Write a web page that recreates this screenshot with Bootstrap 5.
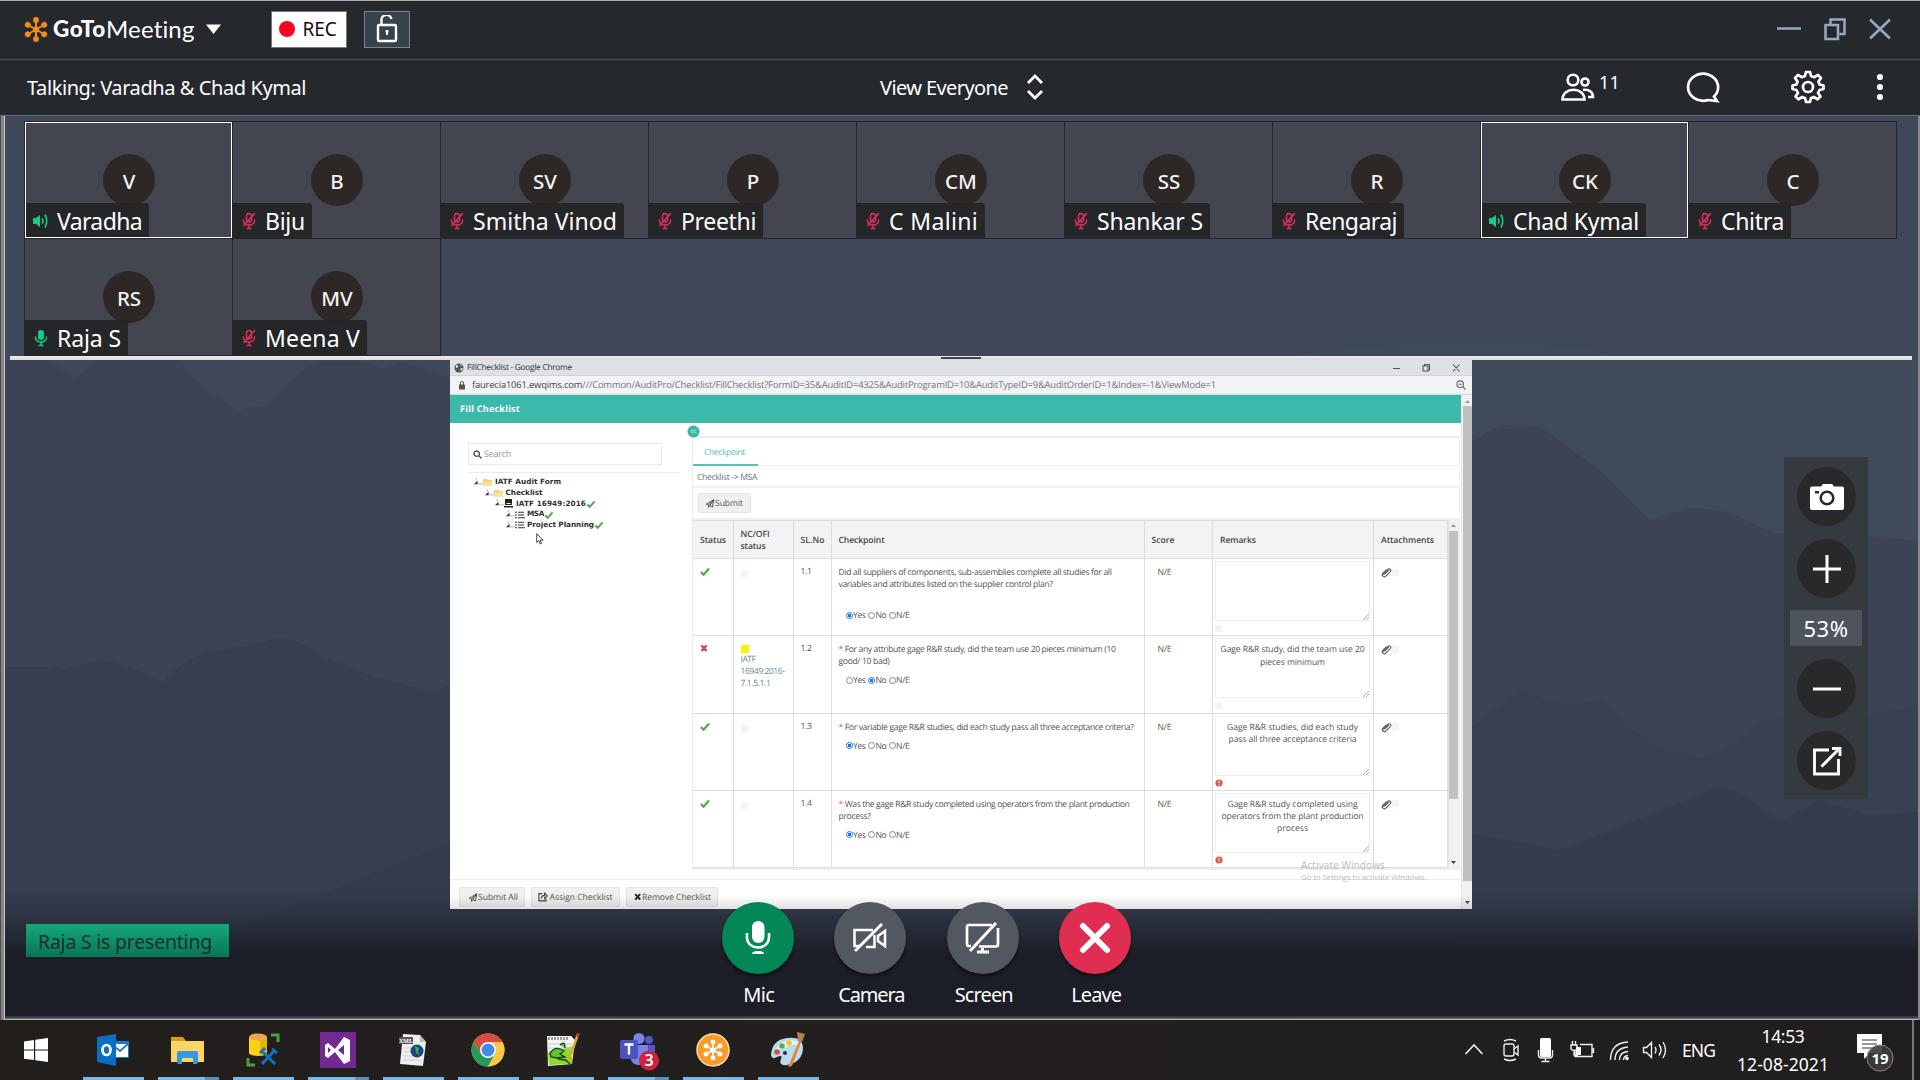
<!DOCTYPE html>
<html lang="en">
<head>
<meta charset="utf-8">
<title>GoToMeeting</title>
<link href="https://cdn.jsdelivr.net/npm/bootstrap@5.3.0/dist/css/bootstrap.min.css" rel="stylesheet">
<style>
body{width:1920px;height:1080px;overflow:hidden;background:#1f1d1d;font-family:"Noto Sans","Open Sans",sans-serif;color:#fff}
svg{display:block;flex:none}
[data-w]{white-space:nowrap;display:inline-block}
.meeting{height:1020px;border-top:1px solid #a9abad;background:#3f475b;overflow:hidden}
.titlebar{height:59px;background:#25292e;border-bottom:1px solid #4d515e;padding:0 29px 2px 23px}
.brand{font:24px/30px Lato,sans-serif}
.brand b{font-weight:900;font-size:22.5px}
.brand .thin{font-weight:400}
.rec{width:76px;height:37px;background:#fff;border:1px solid #777;color:#111;font-size:19px;margin-left:48px}
.dot{width:16px;height:16px;border-radius:50%;background:#fb0320}
.lock{width:46px;height:37px;background:#37434a;border:1px solid #7b8388;margin-left:17px}
.toolbar{height:56px;background:#25292e;border-top:1px solid #2c3038;border-bottom:1px solid #666a70;font-size:20px;padding-left:27px;padding-right:36px}
.toolbar>svg{margin-bottom:2px}
.main-area{height:904px}
.edge-l{width:5px;left:0;top:0;height:904px;background:linear-gradient(90deg,#4a4a4a 1px,#858585 1px,#858585 4px,#c9c9cb 4px)}
.edge-r{width:2px;right:0;top:0;height:904px;background:#8b8985}
.tiles{display:grid;grid-template-columns:repeat(9,208px);grid-template-rows:117px 117px;margin-left:24px;padding-top:5px;height:240px;width:1873px}
.tile{background:#434650;border:1px solid #24262b;margin:0 -1px -1px 0}
.tile.on{box-shadow:inset 0 0 0 1px #fff;z-index:2}
.avatar{width:52px;height:52px;border-radius:50%;background:#2d2725;margin:32px auto 0;padding:2px 0 0 1px;font-size:20.5px;font-weight:500;color:#f3f3f3}
.who{left:0;bottom:0;height:35px;background:rgba(36,36,38,.93);border-top-right-radius:3px;font-size:23px;line-height:34px;padding:0 7px 0 8px}
.on .who{left:1px;bottom:1px;height:34px;padding:2px 7px 0 7px}
.who svg{margin-right:8px}
.divider{height:4px;margin:0 8px 0 10px;background:linear-gradient(#f1ecef,#d9d8da)}
.grip{width:40px;height:2px;background:#44444a}
.shared{width:1022px;height:549px;margin-left:450px;background:#fff;color:#555;font:8.6px/12px "Open Sans",sans-serif;text-rendering:geometricPrecision}
.ch-title{height:16px;background:#dee1e6;border-bottom:1px solid #cfd2d6;color:#333;font-size:8.4px;padding:0 11px 0 4px}
.ch-url{height:19px;background:#f1f3f4;border-bottom:1px solid #d5d7d9;font-size:9.4px;color:#777;padding:0 6px 0 8px}
.ch-url i{font-style:normal;color:#444}
.page{height:514px}
.green{height:28px;background:#3bbaab;color:#fff;font-weight:700;font-size:9px;line-height:28px;padding-left:10px}
.vscroll{width:11px;background:#f1f1f1;border-left:1px solid #e6e6e6}
.thumb{background:#c1c1c1;width:9px}
.tree-side{width:242px;padding:20px 0 0 18px}
.search{width:194px;height:22px;border:1px solid #e9e9e9;color:#999;font-size:9px;padding-left:4px;margin-bottom:7px}
.tree{width:211px;border-top:1px solid #ebebeb;font:bold 7.3px/10.75px "DejaVu Sans",sans-serif;color:#333;padding-top:4px}
.tree div{height:10.75px}
.tree .me-1{margin-right:3px!important}
.panel{width:768px;height:434px;margin-top:13px;border:1px solid #ececec;border-top-width:2px;border-bottom:0}
.tabrow{height:28px;border-bottom:1px solid #eee}
.tab-on{width:65px;height:28px;border-bottom:2px solid #55c3b6;color:#5bc0b2;padding-left:11px;line-height:28px}
.crumb{height:22px;border-bottom:2px solid #f0f0f0;color:#6d7481;padding-left:4px;line-height:22px}
.bar{height:32px;border-bottom:2px solid #efefef;padding:5px}
.fbtn{height:20px;background:#f0f0f0;border:1px solid #e3e3e3;border-radius:2px;color:#555;white-space:nowrap}
.grid-t{width:754.5px;table-layout:fixed;border-collapse:collapse;margin-left:-1px}
.grid-t th,.grid-t td{border:1px solid #dcdcdc;vertical-align:top;padding:7px 0 0 7px;color:#555;font-weight:400}
.grid-t th{background:#f3f3f3;height:38px;vertical-align:middle;padding:0 0 0 7px;color:#444;font-weight:600}
.grid-t tr.r td{height:77px}
.grid-t td.rem{padding:2px 0 0 2px}
.grid-t td.sc{padding-left:13px}
.ta{width:155px;height:60px;border:1px solid #eee;text-align:center;line-height:12.2px;padding:4px 0 0}
.sq{width:7px;height:7px;background:#eef4f8}
.choice{padding-left:7px;margin-top:7px;height:12px}
.choice [data-w]{margin-right:2.5px}
.rd{width:7px;height:7px;border:1px solid #888;border-radius:50%;flex:none;margin-right:.5px}
.rd.c{border-color:#1a7be8;background:radial-gradient(#1677ee 45%,#fff 50%)}
.ast{color:#d9534f}
.foot{height:30px;border-top:1px solid #ebebeb;padding:7px 0 0 9px;gap:6px}
.shade{left:5px;right:2px;top:774px;height:126px;background:linear-gradient(rgba(26,29,37,0),rgba(26,29,37,.22) 20px,#1b1e27 66px,#1b1e27);clip-path:polygon(0 0,445px 0,445px 19px,1467px 19px,1467px 0,100% 0,100% 100%,0 100%)}
.shade-app{bottom:0;left:0;right:0;height:14px;background:linear-gradient(rgba(0,0,0,0),rgba(0,0,0,.12))}
.frame-b{top:900px;height:4px;background:linear-gradient(#333c50 2px,#6f7072 2px,#6f7072 3px,#b5b5b5 3px)}
.presenting{left:26px;top:808px;width:203px;height:33px;background:linear-gradient(#13a97b,#0b7453);color:#16302c;font-size:19.5px;padding-left:12px;line-height:36px}
.controls{left:701.5px;top:786px;font-size:20px}
.ctl{width:112.5px}
.ctl>div{width:72px;height:72px;border-radius:50%;background:#525862;box-shadow:0 3px 3px rgba(0,0,0,.45)}
.ctl>span{margin:6px 0 0 2px}
.side{left:1784px;top:341px;width:84px;height:342px;background:#343a40;padding-top:10px}
.side>div{flex:none}
.side>.rb{width:59px;height:59px;border-radius:50%;background:#292929;margin-bottom:13px;padding:1px 0 0 2px}
.pct{width:72px;height:36px;background:#4d545e;font-size:22px;margin:-1px 0 13px}
.wm{left:1301px;top:743px;color:#bdbdbd;line-height:12px;font-family:"Open Sans",sans-serif}
.wm .big{font-size:10px}
.wm .sub{font-size:8px}
.tasks{height:60px;background:linear-gradient(90deg,#211e1c,#231f1f 50%,#201e1e);padding-left:8px}
.app-i{width:75px;height:60px}
.app-i>svg{margin:auto}
.run{width:61px;height:3px;background:#76b9ed;bottom:0;left:8px}
.run.multi{background:linear-gradient(90deg,#76b9ed 47px,#5d90b8 47px)}
.tray{margin-left:auto;width:460px;font-size:17.5px}
</style>
<script src="https://cdn.jsdelivr.net/npm/bootstrap@5.3.0/dist/js/bootstrap.bundle.min.js"></script>
</head>
<body>
<svg width="0" height="0" class="position-absolute">
<defs>
<symbol id="muted" viewBox="0 0 16 18"><g fill="none" stroke="#e0305a" stroke-width="1.5"><rect x="5.5" y="1.5" width="5" height="8.5" rx="2.5"/><path d="M2.5 7.5v1c0 6 11 6 11 0v-1M8 13v3M5.5 16.5h5M14 1 2.5 14"/></g></symbol>
<symbol id="live" viewBox="0 0 16 18"><rect x="5" y="1" width="6" height="10" rx="3" fill="#12cd89"/><path d="M2.5 7.5v1c0 6 11 6 11 0v-1M8 13v3M5.5 16.5h5" fill="none" stroke="#12cd89" stroke-width="1.5"/></symbol>
<symbol id="spk" viewBox="0 0 16 16"><path d="M0 5h3l4-3v12l-4-3H0z" fill="#12cd89"/><path d="M9 5.500q2 2.500 0 5M12 1.500q3.500 6.500 0 13" fill="none" stroke="#12cd89" stroke-width="1.700"/></symbol>
<symbol id="flower" viewBox="-13 -13 26 26"><g fill="currentColor" stroke="currentColor"><g id="pt"><path d="M0 0V-9" stroke-width="2"/><circle cy="-9.5" r="2.9" stroke="none"/></g><use href="#pt" transform="rotate(60)"/><use href="#pt" transform="rotate(120)"/><use href="#pt" transform="rotate(180)"/><use href="#pt" transform="rotate(240)"/><use href="#pt" transform="rotate(300)"/><circle r="3" stroke="none"/></g></symbol>
<symbol id="ok" viewBox="0 0 10 9"><path d="M1 5l2.6 2.7L9 1.6" fill="none" stroke="#5aa650" stroke-width="2.3"/></symbol>
<symbol id="clip" viewBox="0 0 11 11"><path d="M2 8 7.3 2.5a1.7 1.7 0 0 1 2.3 2.3L5 9.4A2 2 0 0 1 1.7 7L5.5 3.2M3.5 7.7 7.8 3.5" fill="none" stroke="#666" stroke-width="1.2"/></symbol>
<symbol id="grab" viewBox="0 0 6 6"><path d="M0 6 6 0M3 6l3-3" stroke="#999" stroke-width=".8"/></symbol>
<symbol id="fold" viewBox="0 0 9 8"><path d="M0 1h4l1 1h4v6H0z" fill="#f0cf6b"/><path d="M1 3.5h8V8H0z" fill="#f9e29a"/></symbol>
<symbol id="exp" viewBox="0 0 10 10"><path d="M0 7h4V3z" fill="#333"/><path d="M4 6.5h6M2.5 0v3" stroke="#999" stroke-width=".8"/></symbol>
<symbol id="lst" viewBox="0 0 10 8"><path d="M0 1.2h2M3 1.2h6M0 4h2M3 4h6M0 6.8h2M3 6.8h7" stroke="#333" stroke-width="1.1"/></symbol>
<symbol id="plane" viewBox="0 0 9 9"><path d="M.8 5.2 8.3.8 7 8 4.3 6.6 3 8.3V6zM3 6l5.3-5.2L4.3 6.6" fill="none" stroke="#444" stroke-width=".9"/></symbol>
<symbol id="err" viewBox="0 0 8 8"><circle cx="4" cy="4" r="3.6" fill="#dc5a4c"/><path d="M4 1.8v2.6M4 5.2v1" stroke="#fff" stroke-width="1"/></symbol>
</defs>
</svg>

<div class="meeting">
  <header class="titlebar d-flex align-items-center">
    <svg width="26" height="27" viewBox="-13 -13 26 26" style="color:#f68d16"><use href="#flower" x="-13" y="-13" width="26" height="26"/></svg>
    <div class="brand ms-1 d-flex"><b data-w="53">GoTo</b><span class="thin" data-w="89">Meeting</span></div>
    <svg class="ms-2" width="20" height="12" viewBox="0 0 20 12"><path d="M3 1.5h15L10.500 11z" fill="#fff"/></svg>
    <div class="rec d-flex align-items-center"><span class="dot" style="margin-left:7px"></span><span class="ms-2" data-w="34">REC</span></div>
    <div class="lock d-flex align-items-center justify-content-center"><svg width="22" height="28" viewBox="0 0 22 28" fill="none" stroke="#fff" stroke-width="2.4"><rect x="2" y="10" width="18" height="16" rx="1"/><path d="M5.500 10V6a5 5 0 0 1 10-2"/><path d="M11 15v5M9.500 16.500h3" stroke-width="2"/></svg></div>
    <svg class="ms-auto" width="116" height="24" viewBox="0 0 116 24" fill="none" stroke="#99a9c0" stroke-width="2.500"><path d="M2 11.500h24"/><path d="M55.500 8V2.500H69.500V17H64.500M50.500 8h12.500v14H50.500z"/><path d="M95 2.500 115 21.500M115 2.500 95 21.500"/></svg>
  </header>
  <div class="toolbar d-flex align-items-center">
    <span data-w="279">Talking: Varadha &amp; Chad Kymal</span>
    <span style="margin-left:574px" data-w="128">View Everyone</span>
    <svg style="margin-left:18px" width="18" height="26" viewBox="0 0 18 26" fill="none" stroke="#fff" stroke-width="2.800"><path d="M2 9l7-7 7 7M2 17l7 7 7-7"/></svg>
    <svg class="ms-auto" width="34" height="30" viewBox="0 0 34 30" fill="none" stroke="#fff" stroke-width="2.600"><circle cx="12" cy="8" r="5.300"/><circle cx="24" cy="10" r="3.500"/><path d="M1.500 27.500c0-13 22-13 22 0zM22 18c6-1 10 2 10 7h-5"/></svg>
    <span class="pb-2 mb-1" style="font-size:18px;margin-left:4px" data-w="21">11</span>
    <svg style="margin-left:66px" width="34" height="32" viewBox="0 0 34 32" fill="none" stroke="#fff" stroke-width="2.700"><path d="M28 25.500A15 13.500 0 1 0 22 29l9 1z"/></svg>
    <svg style="margin-left:70px" width="36" height="34" viewBox="-18 -17 36 34" fill="none" stroke="#fff" stroke-width="2.700" stroke-linejoin="round"><circle r="5"/><path d="M-3-11-2-15H2L3-11 6-9.800 10-12 13-9 10.500-5.500 11.500-2.500 15.500-1.500V2L11.500 3 10 6 12.500 9.500 9.500 12.300 6 10 3 11 2 15H-2L-3 11-6 10-9.500 12.300-12.500 9.500-10 6-11.500 3-15.500 2V-1.500L-11.500-2.500-10.500-5.500-13-9-10-12-6-9.800Z"/></svg>
    <svg style="margin-left:50px" width="8" height="28" viewBox="0 0 8 28" fill="#fff"><circle cx="4" cy="4" r="3.100"/><circle cx="4" cy="14" r="3.100"/><circle cx="4" cy="24" r="3.100"/></svg>
  </div>

  <main class="main-area position-relative">
    <svg class="position-absolute top-0 start-0" width="1920" height="904" viewBox="0 116 1920 904">
      <rect y="116" width="1920" height="904" fill="#3f475a"/>
      <path d="M1280 356Q1500 330 1620 356L1920 356V560H1455V356Z" fill="#3f4a5b"/>
      <path d="M5 360H50L73 379 100 360H180Q195 385 238 411L252 407 265 406Q300 370 318 361H360L385 369 400 362Q430 370 450 379V900H5Z" fill="#3c4355"/>
      <path d="M1455 452 1500 425 1540 427 1600 470 1650 520 1690 508Q1715 508 1735 515L1772 533 1868 536 1918 541V1020H1455Z" fill="#3c4356"/>
      <path d="M5 667H50L55 665 60 670 100 660Q125 662 162 682 185 660 205 653L262 643Q290 630 322 657L372 676 425 690H440L450 684V1020H5Z" fill="#363e4f"/>
      <path d="M1455 740 1520 690 1560 705 1600 700 1650 745 1700 758Q1740 745 1755 726 1765 718 1784 716H1868L1918 706V1020H1455Z" fill="#394053"/>
      <path d="M1455 830 1560 850 1650 815 1700 795Q1722 780 1745 796L1780 822 1820 800 1868 815 1918 812V1020H1455Z" fill="#343c4d"/>
      <path d="M30 1010 450 843H1455V1020H30Z" fill="#343b4c"/>
    </svg>
    <section class="tiles position-relative">
      <div class="tile on position-relative"><div class="avatar d-flex align-items-center justify-content-center">V</div><div class="who position-absolute d-flex align-items-center"><svg width="16" height="16"><use href="#spk"/></svg><span data-w="85">Varadha</span></div></div>
      <div class="tile position-relative"><div class="avatar d-flex align-items-center justify-content-center">B</div><div class="who position-absolute d-flex align-items-center"><svg width="16" height="18"><use href="#muted"/></svg><span data-w="40">Biju</span></div></div>
      <div class="tile position-relative"><div class="avatar d-flex align-items-center justify-content-center">SV</div><div class="who position-absolute d-flex align-items-center"><svg width="16" height="18"><use href="#muted"/></svg><span data-w="144">Smitha Vinod</span></div></div>
      <div class="tile position-relative"><div class="avatar d-flex align-items-center justify-content-center">P</div><div class="who position-absolute d-flex align-items-center"><svg width="16" height="18"><use href="#muted"/></svg><span data-w="75">Preethi</span></div></div>
      <div class="tile position-relative"><div class="avatar d-flex align-items-center justify-content-center">CM</div><div class="who position-absolute d-flex align-items-center"><svg width="16" height="18"><use href="#muted"/></svg><span data-w="89">C Malini</span></div></div>
      <div class="tile position-relative"><div class="avatar d-flex align-items-center justify-content-center">SS</div><div class="who position-absolute d-flex align-items-center"><svg width="16" height="18"><use href="#muted"/></svg><span data-w="106">Shankar S</span></div></div>
      <div class="tile position-relative"><div class="avatar d-flex align-items-center justify-content-center">R</div><div class="who position-absolute d-flex align-items-center"><svg width="16" height="18"><use href="#muted"/></svg><span data-w="92">Rengaraj</span></div></div>
      <div class="tile on position-relative"><div class="avatar d-flex align-items-center justify-content-center">CK</div><div class="who position-absolute d-flex align-items-center"><svg width="16" height="16"><use href="#spk"/></svg><span data-w="126">Chad Kymal</span></div></div>
      <div class="tile position-relative"><div class="avatar d-flex align-items-center justify-content-center">C</div><div class="who position-absolute d-flex align-items-center"><svg width="16" height="18"><use href="#muted"/></svg><span data-w="63">Chitra</span></div></div>
      <div class="tile position-relative"><div class="avatar d-flex align-items-center justify-content-center">RS</div><div class="who position-absolute d-flex align-items-center"><svg width="16" height="18"><use href="#live"/></svg><span data-w="64">Raja S</span></div></div>
      <div class="tile position-relative"><div class="avatar d-flex align-items-center justify-content-center">MV</div><div class="who position-absolute d-flex align-items-center"><svg width="16" height="18"><use href="#muted"/></svg><span data-w="95">Meena V</span></div></div>
    </section>
    <div class="divider position-relative d-flex justify-content-center align-items-center"><div class="grip"></div></div>

    <section class="shared position-relative d-flex flex-column">
      <div class="ch-title d-flex align-items-center">
        <svg width="10" height="10" viewBox="0 0 10 10"><circle cx="5" cy="5" r="4.500" fill="#555"/><path d="M2 2q3 0 2 2-2 2-2 0M6 6q3-2 3 0L7 8zM6 1l1 2 1-1" fill="#dee1e6"/></svg>
        <span style="margin-left:3px" data-w="105">FillChecklist - Google Chrome</span>
        <svg class="ms-auto" width="68" height="10" viewBox="0 0 68 10" fill="none" stroke="#555" stroke-width="1.100"><path d="M0 5.500h7M30 3h5v5h-5zM31.500 3V1.500h5V7H35M60 1.500l6.500 7M66.500 1.500 60 8.500"/></svg>
      </div>
      <div class="ch-url d-flex align-items-center">
        <svg width="8" height="9" viewBox="0 0 8 9"><rect x="1" y="3.500" width="6" height="5" fill="#555"/><path d="M2.500 4V2a1.500 1.500 0 0 1 3 0v2" fill="none" stroke="#555"/></svg>
        <span style="margin-left:6px" data-w="744"><i>faurecia1061.ewqims.com</i>///Common/AuditPro/Checklist/FillChecklist?FormID=35&amp;AuditID=4325&amp;AuditProgramID=10&amp;AuditTypeID=9&amp;AuditOrderID=1&amp;Index=-1&amp;ViewMode=1</span>
        <svg class="ms-auto" width="10" height="10" viewBox="0 0 10 10" fill="none" stroke="#666" stroke-width="1.100"><circle cx="4.200" cy="4.200" r="3.300"/><path d="M2.500 4.200h3.400M6.800 6.800 9.500 9.500"/></svg>
      </div>
      <div class="page d-flex">
        <div style="width:1011px">
          <div class="green"><span data-w="60">Fill Checklist</span></div>
          <div class="d-flex" style="height:456px">
            <div class="tree-side">
              <div class="search d-flex align-items-center"><svg width="9" height="9" viewBox="0 0 9 9" fill="none" stroke="#555" stroke-width="1.400"><circle cx="3.700" cy="3.700" r="2.700"/><path d="M5.800 5.800 8.500 8.500"/></svg><span style="margin-left:2px" data-w="27">Search</span></div>
              <div class="tree">
                <div class="d-flex align-items-center" style="padding-left:6px"><svg width="9" height="9"><use href="#exp"/></svg><svg class="me-1" width="9" height="8"><use href="#fold"/></svg><span data-w="66">IATF Audit Form</span></div>
                <div class="d-flex align-items-center" style="padding-left:16.500px"><svg width="9" height="9"><use href="#exp"/></svg><svg class="me-1" width="9" height="8"><use href="#fold"/></svg><span data-w="37">Checklist</span></div>
                <div class="d-flex align-items-center" style="padding-left:27px"><svg width="9" height="9"><use href="#exp"/></svg><svg class="me-1" width="9" height="9" viewBox="0 0 9 9"><path d="M1 0h7v6H1zM0 7h9v1.500H0z" fill="#222"/><path d="M2.500 4.500h4" stroke="#fff"/></svg><span data-w="70">IATF 16949:2016</span><svg width="10" height="8"><use href="#ok"/></svg></div>
                <div class="d-flex align-items-center" style="padding-left:38px"><svg width="9" height="9"><use href="#exp"/></svg><svg style="margin-right:2px" width="10" height="8"><use href="#lst"/></svg><span data-w="17">MSA</span><svg width="10" height="8"><use href="#ok"/></svg></div>
                <div class="d-flex align-items-center" style="padding-left:38px"><svg width="9" height="9"><use href="#exp"/></svg><svg style="margin-right:2px" width="10" height="8"><use href="#lst"/></svg><span data-w="67">Project Planning</span><svg width="10" height="8"><use href="#ok"/></svg></div>
                <svg style="margin:2px 0 0 68px" width="8" height="12" viewBox="0 0 8 12"><path d="M.7.7V9.500L2.800 7.600 4.200 11 5.500 10.400 4.200 7.200H7z" fill="#fff" stroke="#333" stroke-width=".9"/></svg>
              </div>
            </div>
            <div class="panel position-relative">
              <svg class="position-absolute" style="left:-6px;top:-13px" width="13" height="13" viewBox="0 0 13 13"><circle cx="6.500" cy="6.500" r="6" fill="#3bb5a5"/><path d="M6 4.500l-2 2 2 2M9 4.500l-2 2 2 2" fill="none" stroke="#d9f5f1"/></svg>
              <div class="tabrow"><div class="tab-on"><span data-w="41">Checkpoint</span></div></div>
              <div class="crumb"><span data-w="60">Checklist -&gt; MSA</span></div>
              <div class="bar"><div class="fbtn d-inline-flex align-items-center" style="width:53px;padding-left:6px"><svg width="10" height="9"><use href="#plane"/></svg><span data-w="28">Submit</span></div></div>
              <div class="d-flex" style="height:350px;border-bottom:2px solid #eee;overflow:hidden">
                <table class="grid-t">
                  <colgroup><col style="width:40.500px"><col style="width:60px"><col style="width:38px"><col style="width:313px"><col style="width:68.500px"><col style="width:161px"><col style="width:73.500px"></colgroup>
                  <tr><th><span data-w="26">Status</span></th><th><span data-w="29">NC/OFI</span><br><span data-w="25">status</span></th><th><span data-w="24">SL.No</span></th><th><span data-w="46">Checkpoint</span></th><th><span data-w="23">Score</span></th><th><span data-w="36">Remarks</span></th><th><span data-w="53">Attachments</span></th></tr>
                  <tr class="r"><td><svg width="10" height="9" style="margin-top:1px"><use href="#ok"/></svg></td><td><div class="sq mt-1"></div></td><td style="padding-top:6px"><span data-w="11">1.1</span></td>
                    <td><span data-w="273">Did all suppliers of components, sub-assemblies complete all studies for all</span><br><span data-w="214">variables and attributes listed on the supplier control plan?</span><div class="choice d-flex align-items-center" style="margin-top:19px"><span class="rd c"></span><span data-w="12.5">Yes</span><span class="rd"></span><span data-w="10.5">No</span><span class="rd"></span><span data-w="13.5">N/E</span></div></td>
                    <td class="sc"><span data-w="14">N/E</span></td><td class="rem"><div class="ta d-flex align-items-end justify-content-end"><svg width="6" height="6"><use href="#grab"/></svg></div><div class="sq mt-1"></div></td><td><div class="d-flex align-items-center"><svg width="11" height="12"><use href="#clip"/></svg><div class="sq"></div></div></td></tr>
                  <tr class="r"><td><svg width="9" height="9" viewBox="0 0 9 9" style="margin-top:1px"><path d="M1.500 1.500l5 5.500M6.500 1.500l-5 5.500" stroke="#cf4a44" stroke-width="2.500"/></svg></td><td><div style="width:8px;height:8px;margin:2px 0 0;background:#fff000"></div><span style="color:#6b8597"><span data-w="15">IATF</span><br><span data-w="44">16949:2016-</span><br><span data-w="30">7.1.5.1.1</span></span></td><td style="padding-top:6px"><span data-w="11">1.2</span></td>
                    <td><span data-w="277"><span class="ast">*</span> For any attribute gage R&amp;R study, did the team use 20 pieces minimum (10</span><br><span data-w="51">good/ 10 bad)</span><div class="choice d-flex align-items-center"><span class="rd"></span><span data-w="12.5">Yes</span><span class="rd c"></span><span data-w="10.5">No</span><span class="rd"></span><span data-w="13.5">N/E</span></div></td>
                    <td class="sc"><span data-w="14">N/E</span></td><td class="rem"><div class="ta position-relative"><span data-w="144">Gage R&amp;R study, did the team use 20</span><br><span data-w="65">pieces minimum</span><svg class="position-absolute bottom-0 end-0" width="6" height="6"><use href="#grab"/></svg></div><div class="sq mt-1"></div></td><td><div class="d-flex align-items-center"><svg width="11" height="12"><use href="#clip"/></svg><div class="sq"></div></div></td></tr>
                  <tr class="r"><td><svg width="10" height="9" style="margin-top:1px"><use href="#ok"/></svg></td><td><div class="sq mt-1"></div></td><td style="padding-top:6px"><span data-w="11">1.3</span></td>
                    <td><span data-w="295"><span class="ast">*</span> For variable gage R&amp;R studies, did each study pass all three acceptance criteria?</span><div class="choice d-flex align-items-center"><span class="rd c"></span><span data-w="12.5">Yes</span><span class="rd"></span><span data-w="10.5">No</span><span class="rd"></span><span data-w="13.5">N/E</span></div></td>
                    <td class="sc"><span data-w="14">N/E</span></td><td class="rem"><div class="ta position-relative"><span data-w="131">Gage R&amp;R studies, did each study</span><br><span data-w="128">pass all three acceptance criteria</span><svg class="position-absolute bottom-0 end-0" width="6" height="6"><use href="#grab"/></svg></div><svg style="margin-top:3px" width="8" height="8"><use href="#err"/></svg></td><td><div class="d-flex align-items-center"><svg width="11" height="12"><use href="#clip"/></svg><div class="sq"></div></div></td></tr>
                  <tr class="r"><td><svg width="10" height="9" style="margin-top:1px"><use href="#ok"/></svg></td><td><div class="sq mt-1"></div></td><td style="padding-top:6px"><span data-w="11">1.4</span></td>
                    <td><span data-w="291"><span class="ast">*</span> Was the gage R&amp;R study completed using operators from the plant production</span><br><span data-w="32">process?</span><div class="choice d-flex align-items-center"><span class="rd c"></span><span data-w="12.5">Yes</span><span class="rd"></span><span data-w="10.5">No</span><span class="rd"></span><span data-w="13.5">N/E</span></div></td>
                    <td class="sc"><span data-w="14">N/E</span></td><td class="rem"><div class="ta position-relative"><span data-w="130">Gage R&amp;R study completed using</span><br><span data-w="142">operators from the plant production</span><br><span data-w="31">process</span><svg class="position-absolute bottom-0 end-0" width="6" height="6"><use href="#grab"/></svg></div><svg style="margin-top:3px" width="8" height="8"><use href="#err"/></svg></td><td><div class="d-flex align-items-center"><svg width="11" height="12"><use href="#clip"/></svg><div class="sq"></div></div></td></tr>
                </table>
                <div class="vscroll d-flex flex-column align-items-center"><svg width="9" height="11" viewBox="0 0 9 11"><path d="M2 7h5L4.500 4z" fill="#999"/></svg><div class="thumb" style="height:268px"></div><svg class="mt-auto" width="9" height="12" viewBox="0 0 9 12"><path d="M2 5h5L4.500 8z" fill="#444"/></svg></div>
              </div>
            </div>
          </div>
          <div class="foot d-flex">
            <div class="fbtn d-flex align-items-center" style="width:66px;padding-left:8px"><svg width="10" height="9"><use href="#plane"/></svg><span data-w="40">Submit All</span></div>
            <div class="fbtn d-flex align-items-center" style="width:89px;padding-left:6px"><svg style="margin-right:1.500px" width="10" height="10" viewBox="0 0 9 9" fill="none" stroke="#444"><path d="M4 1.500H.8v6.500h6.500V6M3 6q0-3 3-3V1l2.500 2.500L6 6V4"/></svg><span data-w="63">Assign Checklist</span></div>
            <div class="fbtn d-flex align-items-center" style="width:92px;padding-left:7px"><svg width="8" height="8" viewBox="0 0 8 8"><path d="M1.200 1.200l5 5.500M6.200 1.200l-5 5.500" stroke="#222" stroke-width="1.900"/></svg><span data-w="69">Remove Checklist</span></div>
          </div>
        </div>
        <div class="vscroll d-flex flex-column align-items-center"><svg width="9" height="11" viewBox="0 0 9 11"><path d="M2 8h5L4.500 5z" fill="#999"/></svg><div class="thumb" style="height:475px"></div><svg class="mt-auto" width="9" height="12" viewBox="0 0 9 12"><path d="M2 4h5L4.500 7z" fill="#444"/></svg></div>
      </div>
      <div class="shade-app position-absolute"></div>
    </section>

    <div class="wm position-absolute d-flex flex-column align-items-start"><span class="big" data-w="84">Activate Windows</span><span class="sub" data-w="125">Go to Settings to activate Windows.</span></div>
    <div class="shade position-absolute"></div>
    <div class="frame-b position-absolute w-100"></div>
    <div class="edge-l position-absolute"></div>
    <div class="edge-r position-absolute"></div>
    <div class="presenting position-absolute"><span data-w="174">Raja S is presenting</span></div>

    <div class="controls position-absolute d-flex">
      <div class="ctl d-flex flex-column align-items-center"><div class="d-flex align-items-center justify-content-center" style="background:#038757"><svg width="26" height="34" viewBox="0 0 26 34"><rect x="7" y="0" width="12.500" height="22" rx="6.200" fill="#fff"/><path d="M2 12v4c0 14 22 14 22 0v-4" fill="none" stroke="#fff" stroke-width="2.600"/><path d="M7 33q0-3 6-3t6 3z" fill="#fff"/></svg></div><span data-w="31">Mic</span></div>
      <div class="ctl d-flex flex-column align-items-center"><div class="d-flex align-items-center justify-content-center"><svg width="36" height="30" viewBox="0 0 36 30" fill="none" stroke="#fff" stroke-width="2.500"><path d="M21 7H2.500V23H8M14 24h8.500V12M26 13l7-5V23l-7-5z"/><path d="M30 1 3 28" stroke-width="3"/></svg></div><span data-w="66">Camera</span></div>
      <div class="ctl d-flex flex-column align-items-center"><div class="d-flex align-items-center justify-content-center"><svg width="36" height="32" viewBox="0 0 36 32" fill="none" stroke="#fff" stroke-width="2.700"><path d="M27 3H4Q2 3 2 5V22Q2 24 4 24H6M14 24.500H31Q33 24.500 33 22V6"/><path d="M31 1 5 29" stroke-width="3"/><path d="M17.500 26v3M12 30h12" stroke-width="3"/></svg></div><span data-w="58">Screen</span></div>
      <div class="ctl d-flex flex-column align-items-center"><div class="d-flex align-items-center justify-content-center" style="background:#e02e53"><svg width="32" height="32" viewBox="0 0 32 32"><path d="M4 4 28 28M28 4 4 28" stroke="#fff" stroke-width="6" stroke-linecap="round"/></svg></div><span data-w="50">Leave</span></div>
    </div>

    <aside class="side position-absolute d-flex flex-column align-items-center">
      <div class="rb d-flex align-items-center justify-content-center"><svg width="34" height="27" viewBox="0 0 34 27"><path d="M2 2.500h9L13 0h9l2 2.500h8q2 0 2 2V24q0 2-2 2H2q-2 0-2-2V4.500q0-2 2-2z" fill="#fff"/><circle cx="17" cy="14" r="6.300" fill="#fff" stroke="#292929" stroke-width="2.600"/><rect x="5" y="7" width="4" height="2.500" fill="#292929"/></svg></div>
      <div class="rb d-flex align-items-center justify-content-center"><svg width="28" height="28" viewBox="0 0 28 28"><path d="M14 0v28M0 14h28" stroke="#fff" stroke-width="3"/></svg></div>
      <div class="pct d-flex align-items-center justify-content-center"><span data-w="45">53%</span></div>
      <div class="rb d-flex align-items-center justify-content-center"><svg width="28" height="4"><path d="M0 2h28" stroke="#fff" stroke-width="3"/></svg></div>
      <div class="rb d-flex align-items-center justify-content-center"><svg width="30" height="30" viewBox="0 0 30 30" fill="none" stroke="#fff" stroke-width="2.800"><path d="M17 4H2.500V28H26.500V13"/><path d="M9.500 20.500 26 4" stroke-width="3"/><path d="M20 2.500h8V10" /></svg></div>
    </aside>
  </main>
</div>

<footer class="tasks d-flex align-items-center">
  <div class="d-flex" style="width:67px"><svg class="ms-3" width="24" height="24" viewBox="0 0 24 24" fill="#fff"><path d="M0 3.500 10 2v9.500H0zM11.200 1.800 24 0v11.500H11.200zM0 12.600h10V22L0 20.700zM11.200 12.600H24V24L11.200 22.200z"/></svg></div>
  <div class="app-i d-flex position-relative"><svg width="32" height="32" viewBox="0 0 32 32"><rect x="15" y="7" width="17" height="17" fill="#1a7bd0"/><path d="M16 10h15v13H16z" fill="#fff"/><path d="M17 12l6 5 9-8" fill="none" stroke="#1a7bd0" stroke-width="1.800"/><path d="M0 3 19 0V32L0 28z" fill="#0a6fc4"/><ellipse cx="9.500" cy="16" rx="4" ry="5" fill="none" stroke="#fff" stroke-width="2.700"/></svg><div class="run position-absolute"></div></div>
  <div class="app-i d-flex position-relative"><svg width="33" height="28" viewBox="0 0 33 28"><path d="M0 1h12l3 4h17v8H0z" fill="#e09a08"/><path d="M0 5h33v21H0z" fill="#fcd664"/><path d="M6 26V17q0-2 2-2h17q2 0 2 2v9q0 2-2 2h-3v-6H11v6H8q-2 0-2-2z" fill="#3a97dd"/></svg><div class="run multi position-absolute"></div></div>
  <div class="app-i d-flex position-relative"><svg width="34" height="34" viewBox="0 0 34 34"><path d="M3 4v17q9 4 18 0V4z" fill="#fbd112"/><path d="M14 4h7v17q-3 1.500-7 2z" fill="#e8b400"/><ellipse cx="12" cy="4" rx="9" ry="3.500" fill="#eda35a"/><path d="M25 2h7v7M2 25v7h7" fill="none" stroke="#4a9e46" stroke-width="3"/><path d="M16 31 29 17M15 17l14 14M14 20l5-5M26 16l5 4" stroke="#1173c0" stroke-width="3"/></svg><div class="run position-absolute"></div></div>
  <div class="app-i d-flex position-relative"><svg width="36" height="36" viewBox="0 0 36 36"><rect width="36" height="36" fill="#722a92"/><path d="M5 13l3-2 7 6 9-12 6 3v21l-6 3-9-12-7 6-3-2zM8 15v6l3-3zM24 13l-6 5 6 5z" fill="#fff" fill-rule="evenodd"/></svg><div class="run multi position-absolute"></div></div>
  <div class="app-i d-flex position-relative"><svg width="28" height="34" viewBox="0 0 28 34"><path d="M4 1l17 1 6 7-3 24-23-2z" fill="#eee"/><path d="M21 2v7h6z" fill="#bbb"/><path d="M5 15h12M5 19h9M4 23h10M4 27h17" stroke="#ccc"/><circle cx="18" cy="18" r="6.500" fill="#17457f"/><path d="M16 13l4 2-1 4 2 3-4-2z" fill="#51a352"/><rect x="0" y="4" width="14" height="7" fill="#555"/><text x="7" y="10" text-anchor="middle" font-size="6" font-weight="700" fill="#fff" font-family="Liberation Serif">XML</text></svg><div class="run position-absolute"></div></div>
  <div class="app-i d-flex position-relative"><svg width="34" height="34" viewBox="-17 -17 34 34"><circle r="16.500" fill="#f9c846"/><path d="M0 0 14.300-8.200A16.500 16.500 0 0 0-14.300-8.200L-7 4z" fill="#d94a3f"/><path d="M-14.300-8.200A16.500 16.500 0 0 0 0 16.500L7 4H-7z" fill="#259b59"/><path d="M0 16.500A16.500 16.500 0 0 0 14.500-8H0L7 4z" fill="#f9c846"/><circle r="8" fill="#fff"/><circle r="6.500" fill="#4688f1"/></svg><div class="run position-absolute"></div></div>
  <div class="app-i d-flex position-relative"><svg width="34" height="34" viewBox="0 0 34 34"><path d="M1 3h24l4 4-3 24-24 2z" fill="#f5f7f0"/><path d="M2 20l24-7v18L3 32z" fill="#8fdb2a"/><path d="M3 4v3M6 4v3M9 4v3M12 4v3M15 4v3M18 4v3M21 4v3" stroke="#444"/><path d="M1 11h25M1 15h25" stroke="#b9cbe0"/><path d="M4 20q6-8 14-2l-4 3 5 3-8 1-6-1zM14 12q5-5 5 3M12 26l8 1 4 4" fill="#67c032" stroke="#173f12" stroke-width="1.300"/><path d="M32 1 23 27" stroke="#e6a92a" stroke-width="2.500"/><path d="M32.500 0l-1 4" stroke="#b33" stroke-width="2.500"/></svg><div class="run position-absolute"></div></div>
  <div class="app-i d-flex position-relative"><svg width="40" height="36" viewBox="0 0 40 36" style="overflow:visible"><circle cx="31" cy="8" r="4" fill="#5059c9"/><circle cx="21" cy="6.500" r="5.500" fill="#7b83eb"/><path d="M26 13h11v9q0 6-6 6h-5z" fill="#5059c9"/><path d="M12 13h18v11q-1 9-9 9t-9-9z" fill="#7b83eb"/><rect x="2" y="8" width="18" height="19" rx="2" fill="#4b53bc"/><path d="M6.500 12.500h9M11 12.500v10" stroke="#fff" stroke-width="2.300"/><circle cx="31" cy="28.500" r="10" fill="#cf2140"/><text x="31" y="34" text-anchor="middle" font-size="16" font-weight="600" fill="#fff" font-family="Noto Sans">3</text></svg><div class="run multi position-absolute"></div></div>
  <div class="app-i d-flex position-relative"><svg width="34" height="34" viewBox="-17 -17 34 34"><circle r="16" fill="#fa9a28" stroke="#ffe0b5" stroke-width="1.500"/><g style="color:#fff"><use href="#flower" x="-11" y="-11" width="22" height="22"/></g></svg><div class="run position-absolute"></div></div>
  <div class="app-i d-flex position-relative"><svg width="36" height="36" viewBox="0 0 36 36"><path d="M1 23Q2 8 17 6 32 4 33 15 33 30 17 33 8 34 11 27 13 22 7 25 2 28 1 23z" fill="#b7dcf0"/><path d="M5 20Q8 9 20 8q9 0 11 6-8-4-16 2z" fill="#e4f4fb"/><circle cx="7" cy="20" r="2.800" fill="#d94f3e"/><circle cx="12" cy="14" r="2.800" fill="#5cae4b"/><circle cx="19" cy="11" r="2.800" fill="#f3c22b"/><circle cx="15" cy="21" r="2" fill="#234"/><path d="M29 9 18 35l4-1 9-24z" fill="#e5852d"/><path d="M27 0l8 2-3 8-4-1z" fill="#b48352"/></svg><div class="run position-absolute"></div></div>

  <div class="tray d-flex align-items-center">
    <svg width="220" height="30" viewBox="1460 1035 220 30" fill="none" stroke="#eee" stroke-width="1.400">
      <path d="M1465.500 1054l8.500-9 8.500 9" stroke-width="1.600"/>
      <rect x="1504" y="1044" width="10" height="12" rx="2"/><path d="M1514 1049l4-3v9l-4-3M1504 1041q6-3 12 0M1504 1059q6 3 12 0"/>
      <rect x="1540" y="1038" width="11" height="19" rx="1.500" fill="#fff" stroke="none"/><path d="M1538.500 1050v5q0 3 3 3h8q3 0 3-3v-5M1545.500 1058v3.500M1541.500 1061.500h8"/>
      <path d="M1580 1044.500h12v12h-17v-6M1593.500 1048v5M1571 1045h6v4q-3 3-6 0zM1572.500 1041v4M1575.500 1041v4M1574 1051v4h4"/><path d="M1576 1047h5v8h-5z" fill="#fff" stroke="none"/>
      <path d="M1610.500 1060q0-17 17.500-18M1615 1060q0-12 13-13M1619.500 1060q0-8 8.500-8.500M1623.500 1060q0-4 4.500-4.500"/><circle cx="1627" cy="1058.500" r="1.800" fill="#fff" stroke="none"/>
      <path d="M1643.500 1047.500h3l5-5v15l-5-5h-3zM1655 1047q2 3 0 6.500M1659 1044.500q4 5 0 11M1663 1042q5 8 0 16"/>
    </svg>
    <span data-w="33" style="margin-left:2px">ENG</span>
    <div class="text-center" style="margin-left:20px;width:96px;line-height:28px"><span data-w="43">14:53</span><br><span data-w="92">12-08-2021</span></div>
    <svg style="margin:6px 0 0 25px" width="38" height="40" viewBox="0 0 38 40"><path d="M1 1h25v19H14l-6 6v-6H1z" fill="#fff"/><path d="M6 7h15M6 11h15M6 15h11" stroke="#333"/><circle cx="24" cy="25" r="13" fill="#3b3b3b" stroke="#8a8a8a" fill-opacity=".9"/><text x="24" y="30.500" text-anchor="middle" font-size="15" font-weight="700" fill="#fff" font-family="Noto Sans">19</text></svg>
    <div class="ms-auto" style="width:8px;height:60px;border-left:2px solid #777"></div>
  </div>
</footer>
<script>
// Tune tracking so that every label fills the width given for it
document.querySelectorAll('[data-w]').forEach(function (el) {
  var want = +el.dataset.w, have = el.getBoundingClientRect().width;
  var n = el.textContent.length;
  el.style.letterSpacing = ((want - have) / n) + 'px';
});
</script>
</body>
</html>
